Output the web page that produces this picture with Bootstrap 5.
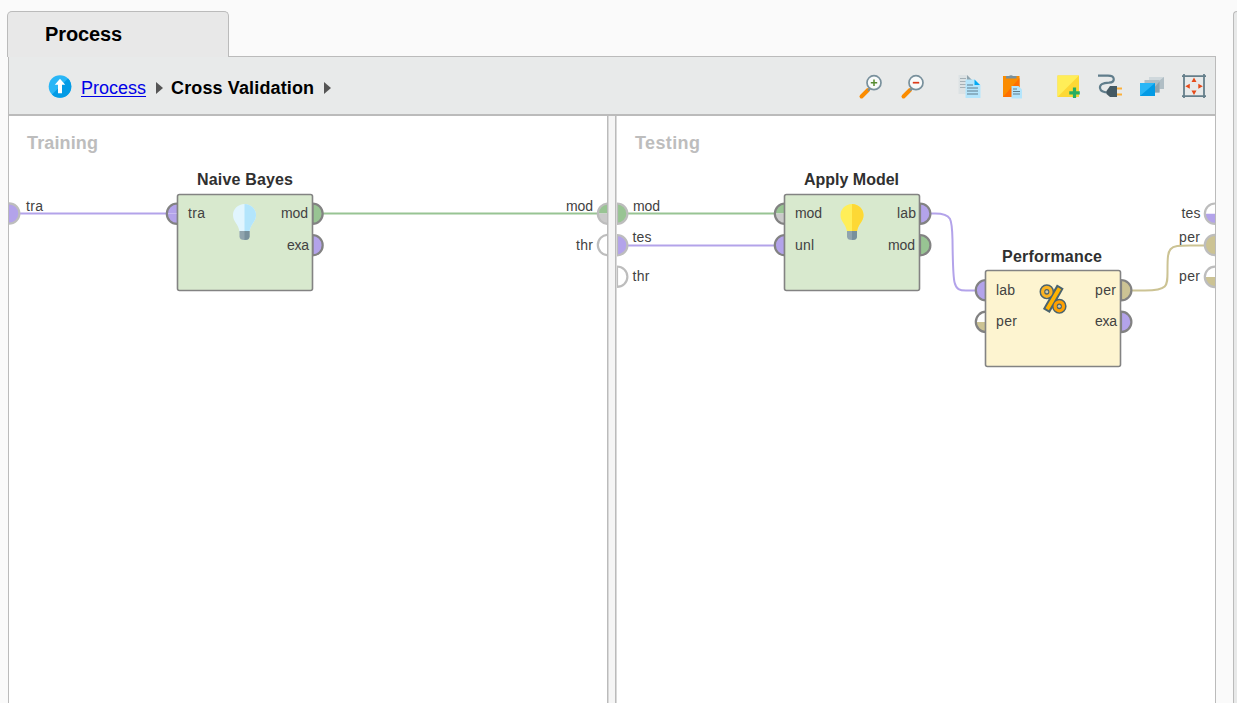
<!DOCTYPE html>
<html lang="en">
<head>
<meta charset="utf-8">
<title>Process</title>
<link href="https://cdn.jsdelivr.net/npm/bootstrap@5.3.0/dist/css/bootstrap.min.css" rel="stylesheet">
<style>
body{background:#fafafa;font-family:"Liberation Sans",Arial,sans-serif;color:#000}
.side-panel{width:4px;margin-top:11px;border-left:1.500px solid #bbb;border-top:1px solid #bbb;border-top-left-radius:4px;background:#e8e9e9}
.workspace{width:1209px;margin-left:7px;padding-top:11px}
.tab-head{width:222px;height:46px;margin-bottom:-1px;padding:10px 0 0 37px;background:#e8e8e8;border:1px solid #bbb;border-bottom:0;border-radius:5px 5px 0 0;font-size:20px;line-height:24px;letter-spacing:-.1px;z-index:1}
.tab-body{border:1px solid #bbb;margin-left:1px;border-bottom:0}
.crumbs{height:59px;background:#e8eaea;border-bottom:2px solid #bbb;font-size:18px;padding-top:2px}
.crumbs a{margin-left:9px;color:#0000e6;text-underline-offset:2px;text-decoration-thickness:1px}
.crumbs a,.crumbs strong{padding-top:3px}
.crumbs strong{letter-spacing:.13px}
.crumbs svg,.canvas-pane{display:block;flex:none}
.up-icon{margin-left:39px}
.crumb-arrow{margin:3px 0 0 10px}
.crumb-arrow+strong{margin-left:7px}
.tools{margin-top:-3px}
.canvas-pane{background:#fff}
.splitter{width:10px;background:linear-gradient(90deg,#bbb 1px,#d9d9d9 1px 2px,#f5f5f5 2px 8px,#bbb 8px 9px,#d9d9d9 9px)}
.pane-title{font-size:18px;font-weight:bold;fill:#bdbdbd}
.op-title{font-size:16px;font-weight:bold;fill:#303030}
.lbl{font-size:14px;fill:#424242}
.wire{fill:none;stroke-width:2}
.op{stroke:#838383;stroke-width:1.6}
</style>
<script src="https://cdn.jsdelivr.net/npm/bootstrap@5.3.0/dist/js/bootstrap.bundle.min.js"></script>
</head>
<body class="vh-100 overflow-hidden d-flex justify-content-between">
<main class="workspace d-flex flex-column flex-shrink-0">
  <div class="tab-head position-relative fw-bold flex-shrink-0">Process</div>
  <section class="tab-body d-flex flex-column flex-grow-1">
    <header class="crumbs d-flex align-items-center flex-shrink-0">
      <svg class="up-icon" width="24" height="24" viewBox="0 0 24 24"><circle cx="12" cy="11.500" r="11.300" fill="#29b6f6"/><path d="M20 3.500A11.300 11.300 0 0 1 4 19.500z" fill="#039be5"/><path d="M12 3.800 17.200 9.800H14v8.400h-4V9.800H6.800z" fill="#fff"/></svg>
      <a href="#">Process</a>
      <svg class="crumb-arrow" width="8" height="12" viewBox="0 0 8 12"><path d="M0 0 7 6 0 12z" fill="#555"/></svg>
      <strong>Cross Validation</strong>
      <svg class="crumb-arrow" width="8" height="12" viewBox="0 0 8 12"><path d="M0 0 7 6 0 12z" fill="#555"/></svg>
      <svg class="tools ms-auto" width="359" height="32" viewBox="855 68 359 32">
        <g id="zoom-in"><path d="m860.500 95.500 6.500-6.500" stroke="#fb8c00" stroke-width="4" stroke-linecap="round"/><path d="m867 89.500 3-3" stroke="#78909c" stroke-width="2"/><circle cx="873" cy="81.700" r="7" fill="#f8fafa" stroke="#78909c" stroke-width="1.700"/><path d="M869.800 81.700h6.400M873 78.500v6.400" stroke="#558b2f" stroke-width="1.500"/></g>
        <g id="zoom-out"><path d="m902.500 95.500 6.500-6.500" stroke="#fb8c00" stroke-width="4" stroke-linecap="round"/><path d="m909 89.500 3-3" stroke="#78909c" stroke-width="2"/><circle cx="915" cy="81.700" r="7" fill="#f8fafa" stroke="#78909c" stroke-width="1.700"/><path d="M911.800 81.700h6.400" stroke="#dd3b19" stroke-width="1.700"/></g>
        <g id="copy"><path d="M957.500 74h8.500l5 5v14h-13.500z" fill="#dce2e4"/><path d="m966 74 5 5h-5z" fill="#90a4ae"/><path d="M959 77.500h6m-6 3h7m-7 3h7m-7 3h7" stroke="#a5b1b7"/><path d="M964.500 78.500h9.500l5.500 5.500v13h-15z" fill="#b3e5fc"/><path d="m973.500 78.500 5.500 5.500h-5.500z" fill="#03a9f4"/><path d="M966 84h6m-6 3h11m-11 3h11m-11 3h11" stroke="#607d8b" stroke-width="1.200"/></g>
        <g id="paste"><path d="M1002 75h16.500v21H1002z" fill="#fb8c00"/><path d="M1018.500 77v19H1002z" fill="#ff6f00"/><path d="M1005 77.500v-2.500h3a2.500 2 0 0 1 4 0h3.500v2.500z" fill="#78909c"/><path d="M1010.500 85h7l3.500 3.500v9h-10.500z" fill="#b3e5fc"/><path d="M1012 88h4m-4 2.500h7m-7 2.500h7" stroke="#607d8b" stroke-width="1.200"/></g>
        <g id="note"><path d="M1056.500 74.500h21.500v21.500h-21.500z" fill="#fdd835"/><path d="M1056.500 74.500h21.500l-21.500 21.500z" fill="#ffee58"/><path d="M1073.500 86.500v10.500m-5.200-5.200h10.500" stroke="#27ae60" stroke-width="3.200" fill="none"/></g>
        <g id="plug"><path d="M1097 74.700h10c7.500 0 7.500 6.500 1 7-6.500.2-9.500 1.700-9 5.500.5 3.600 4 4.300 9 4.300" fill="none" stroke="#607d8b" stroke-width="2.200"/><path d="M1105.500 90l3.500-5h7v11h-7l-3.500-3z" fill="#455a64"/><path d="M1116 87.500h5m-5 6h5" stroke="#fbb03b" stroke-width="1.800"/></g>
        <g id="layers"><path d="M1148 76h15v12h-15z" fill="#cfd8dc"/><path d="m1148 88 15-12v12z" fill="#b0bec5"/><path d="M1143.500 79h15v12.500h-15z" fill="#b0bec5"/><path d="m1149 91.500 9.500-11v11z" fill="#90a4ae"/><path d="M1139 82h15v13h-15z" fill="#29b6f6"/><path d="m1139 95 15-13v13z" fill="#039be5"/></g>
        <g id="fit"><path d="M1183 73v24m20-24v24M1181 75.200h24m-24 20h24" fill="none" stroke="#657f8b" stroke-width="1.800"/><path d="m1193 76.500 2.500 4.500h-5zm0 17.500 2.500-4.500h-5zm-8.700-8.700 4.500-2.500v5zm17.500 0-4.500-2.500v5z" fill="#e64a19"/></g>
      </svg>
    </header>
    <div class="d-flex flex-grow-1 overflow-hidden">
      <svg class="canvas-pane" width="598" height="587" viewBox="9 116 598 587">
        <text class="pane-title" x="27" y="149" textLength="71">Training</text>
        <path class="wire" d="M20 213.500H167" stroke="#b3a3ea"/>
        <path class="wire" d="M323 213.500H597" stroke="#98c493"/>
        <path d="M9 203.300a10.400 10.200 0 0 1 0 20.400z" fill="#b3a3ea"/><path d="M9 203.300a10.400 10.200 0 0 1 0 20.400" fill="none" stroke="#bdbdbd" stroke-width="2.200"/>
        <text class="lbl" x="26" y="211" textLength="17">tra</text>
        <g stroke="#828282" stroke-width="2.200"><path d="M178 203.500h-1a10.200 10.200 0 0 0 0 20.400h1z" fill="#b3a3ea"/><path d="M312.500 203.500a10.200 10.200 0 0 1 0 20.400z" fill="#98c493"/><path d="M312.500 235a10.200 10.200 0 0 1 0 20.400z" fill="#b3a3ea"/></g>
        <path d="M168 213.500h9" stroke="#c8bcf0"/>
        <rect class="op" x="177.500" y="194.500" width="135" height="96" rx="2" fill="#d8e9ce"/>
        <text class="op-title" x="197" y="185" textLength="96">Naive Bayes</text>
        <text class="lbl" x="188" y="218" textLength="17">tra</text><text class="lbl" x="281" y="218" textLength="27">mod</text><text class="lbl" x="287" y="250" textLength="22">exa</text>
        <g id="bulb-blue"><path d="M244.500 204c-6.500 0-11.500 5-11.500 11 0 7 5.500 9 6.500 16.500h10c1-7.500 6.500-9.500 6.500-16.500 0-6-5-11-11.500-11z" fill="#e1f5fe"/><path d="M244.500 204c6.500 0 11.500 5 11.500 11 0 7-5.500 9-6.500 16.500h-5z" fill="#b3e5fc"/><path d="M239.500 231h10v5.500q0 3.500-5 3.500t-5-3.500z" fill="#90a4ae"/><path d="M244.500 231h5v5.500q0 3.500-5 3.500z" fill="#78909c"/></g>
        <path d="M607 203.500h-.5a8.800 9.800 0 0 0-8.500 10h9z" fill="#98c493"/><path d="M607 213.500h-9a8.800 9.800 0 0 0 8.500 10h.5z" fill="#cacaca"/><path d="M608 203.500a10.200 10.200 0 0 0 0 20.400" fill="none" stroke="#bdbdbd" stroke-width="2.200"/><path d="M608 234.800a10.200 10.200 0 0 0 0 20.400" fill="#fff" stroke="#bdbdbd" stroke-width="2.200"/>
        <text class="lbl" x="566" y="211" textLength="27">mod</text><text class="lbl" x="576" y="250" textLength="17">thr</text>
      </svg>
      <div class="splitter flex-shrink-0"></div>
      <svg class="canvas-pane" width="598" height="587" viewBox="617 116 598 587">
        <text class="pane-title" x="635" y="149" textLength="65">Testing</text>
        <path class="wire" d="M628 213.500H775" stroke="#98c493"/><path class="wire" d="M628 245.500H775" stroke="#b3a3ea"/>
        <path class="wire" d="M930 213.500h5C952 213.500 952 219 952.500 240C953 286 953 290.500 966 290.500h11" stroke="#b3a3ea"/>
        <path class="wire" d="M1131 290.500h14C1168 290.500 1167.500 286 1167.500 271C1167.500 247 1168 245.500 1190 245.500h14" stroke="#ccc394"/>
        <g stroke="#bdbdbd" stroke-width="2.200"><path d="M617 203.500a10.400 10.200 0 0 1 0 20.400z" fill="#98c493"/><path d="M617 235a10.400 10.200 0 0 1 0 20.400z" fill="#b3a3ea"/><path d="M617 266.500a10.400 10.200 0 0 1 0 20.400z" fill="#fff"/></g>
        <text class="lbl" x="633" y="211" textLength="27">mod</text><text class="lbl" x="632.500" y="242" textLength="19">tes</text><text class="lbl" x="632.500" y="281" textLength="17">thr</text>
        <path d="M785 204v9.500h-10q1-9.500 10-9.500z" fill="#98c493"/><path d="M785 223v-9.500h-10q1 9.500 10 9.500z" fill="#cacaca"/>
        <g stroke="#828282" stroke-width="2.200"><path d="M785 203.500a10.200 10.200 0 0 0 0 20.400" fill="none"/><path d="M785 235a10.200 10.200 0 0 0 0 20.400z" fill="#b3a3ea"/><path d="M920 203.500a10.400 10.200 0 0 1 0 20.400z" fill="#b3a3ea"/><path d="M920 235a10.400 10.200 0 0 1 0 20.400z" fill="#98c493"/></g>
        <rect class="op" x="784.500" y="194.500" width="135" height="96" rx="2" fill="#d8e9ce"/>
        <text class="op-title" x="804" y="185" textLength="95">Apply Model</text>
        <text class="lbl" x="795" y="218" textLength="27">mod</text><text class="lbl" x="795" y="250" textLength="19">unl</text><text class="lbl" x="897" y="218" textLength="19">lab</text><text class="lbl" x="888" y="250" textLength="27">mod</text>
        <g id="bulb-yellow" transform="translate(607.500 0)"><path d="M244.500 204c-6.500 0-11.500 5-11.500 11 0 7 5.500 9 6.500 16.500h10c1-7.500 6.500-9.500 6.500-16.500 0-6-5-11-11.500-11z" fill="#ffee58"/><path d="M244.500 204c6.500 0 11.500 5 11.500 11 0 7-5.500 9-6.500 16.500h-5z" fill="#fdd835"/><path d="M239.500 231h10v5.500q0 3.500-5 3.500t-5-3.500z" fill="#90a4ae"/><path d="M244.500 231h5v5.500q0 3.500-5 3.500z" fill="#78909c"/></g>
        <path d="M985 312a10 10 0 0 0-9 10h9z" fill="#fff"/><path d="M976 322h9v10a10 10 0 0 1-9-10z" fill="#ccc394"/>
        <g stroke="#828282" stroke-width="2.200"><path d="M986 280a10.200 10.200 0 0 0 0 20.400z" fill="#b3a3ea"/><path d="M986 311.700a10.200 10.200 0 0 0 0 20.400" fill="none"/><path d="M1121 280a10.400 10.200 0 0 1 0 20.400z" fill="#ccc394"/><path d="M1121 311.700a10.400 10.200 0 0 1 0 20.400z" fill="#b3a3ea"/></g>
        <rect class="op" x="985.500" y="270.500" width="135" height="96" rx="2" fill="#fdf4d0"/>
        <text class="op-title" x="1002" y="262" textLength="100">Performance</text>
        <text class="lbl" x="996" y="295" textLength="19">lab</text><text class="lbl" x="996" y="326" textLength="21">per</text><text class="lbl" x="1095" y="295" textLength="21">per</text><text class="lbl" x="1095" y="326" textLength="22">exa</text>
        <g id="percent" fill="none"><g stroke="#4a636e" stroke-width="6.600"><ellipse cx="1046.800" cy="291.800" rx="4" ry="4.200"/><ellipse cx="1059.300" cy="306.300" rx="4" ry="4.200"/><path d="m1060.300 286.500-14 24.500" stroke-width="7.800"/></g><path d="m1059.500 288.300-12.300 21" stroke="#ffb300" stroke-width="3.800"/><g stroke-width="3.200"><ellipse cx="1046.800" cy="291.800" rx="4.200" ry="4.500" stroke="#fbb321"/><ellipse cx="1059.300" cy="306.300" rx="4.200" ry="4.500" stroke="#ffa000"/></g><circle cx="1046.800" cy="291.800" r="1.500" fill="#cfc9a8"/><circle cx="1059.300" cy="306.300" r="1.500" fill="#cfc9a8"/></g>
        <path d="M1205 213.700h10v10q-9 0-10-10z" fill="#b3a3ea"/><path d="M1205 277h10v10q-9 0-10-10z" fill="#ccc394"/>
        <g stroke="#bdbdbd" stroke-width="2.200"><path d="M1215 203.500a10.200 10.200 0 0 0 0 20.400" fill="none"/><path d="M1215 234.800a10.200 10.200 0 0 0 0 20.400" fill="#ccc394"/><path d="M1215 266.700a10.200 10.200 0 0 0 0 20.400" fill="none"/></g>
        <text class="lbl" x="1181.500" y="218" textLength="19">tes</text><text class="lbl" x="1179" y="242" textLength="21">per</text><text class="lbl" x="1179" y="281" textLength="21">per</text>
      </svg>
    </div>
  </section>
</main>
<aside class="side-panel flex-shrink-0"></aside>
</body>
</html>
